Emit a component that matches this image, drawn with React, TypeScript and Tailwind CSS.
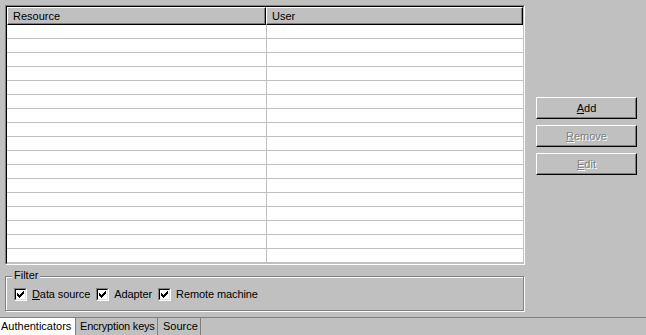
import React from "react";

const CHECK_COLS = [2, 3, 4, 3, 2, 1, 0];

const CheckBox = () => (
  <div className="w-[13px] h-[13px] border border-t-[#808080] border-l-[#808080] border-b-white border-r-white shrink-0">
    <div className="w-full h-full border border-t-black border-l-black border-b-[#dfdfdf] border-r-[#dfdfdf] bg-white">
      <svg width="9" height="9" viewBox="0 0 9 9" shapeRendering="crispEdges">
        {CHECK_COLS.map((start, i) => (
          <rect key={i} x={1 + i} y={1 + start} width="1" height="3" fill="#000" />
        ))}
      </svg>
    </div>
  </div>
);

const HeaderCell = ({ label, className }: { label: string; className: string }) => (
  <div
    className={`h-full border border-t-white border-l-white border-b-black border-r-black shadow-[inset_-1px_-1px_0_#808080] bg-[#c0c0c0] flex items-center pl-[5px] ${className}`}
  >
    {label}
  </div>
);

const Button = ({
  children,
  disabled,
}: {
  children: React.ReactNode;
  disabled?: boolean;
}) => (
  <button
    className={`h-[22px] w-full border border-t-white border-l-white border-b-black border-r-black shadow-[inset_-1px_-1px_0_#808080] bg-[#c0c0c0] flex items-center justify-center ${
      disabled ? "text-[#808080] [text-shadow:1px_1px_0_#fff]" : "text-black"
    }`}
  >
    {children}
  </button>
);

export default function App() {
  const rows = Array.from({ length: 17 });

  return (
    <div className="w-[646px] h-[335px] bg-[#c0c0c0] flex flex-col font-['Liberation_Sans',Arial,sans-serif] text-[11px] leading-none text-black select-none overflow-hidden">
      <div className="flex flex-1 pt-[5px] pl-[5px]">
        <div className="w-[520px] flex flex-col">
          {/* list view */}
          <div className="h-[260px] border border-t-[#808080] border-l-[#808080] border-b-white border-r-white">
            <div className="h-full border border-t-black border-l-black border-b-[#c0c0c0] border-r-[#c0c0c0] bg-white flex flex-col overflow-hidden">
              <div className="h-[18px] flex shrink-0">
                <HeaderCell label="Resource" className="w-[259px]" />
                <HeaderCell label="User" className="flex-1" />
              </div>
              {rows.map((_, i) => (
                <div key={i} className="h-[14px] shrink-0 flex border-b border-[#c0c0c0]">
                  <div className="w-[260px] border-r border-[#c0c0c0]" />
                  <div className="flex-1" />
                </div>
              ))}
            </div>
          </div>

          {/* filter group */}
          <div className="relative mt-[11px] h-[35px] w-[519px] border border-[#808080] shadow-[1px_1px_0_#fff,inset_1px_1px_0_#fff]">
            <span className="absolute left-[6px] top-[-7px] px-[2px] bg-[#c0c0c0]">Filter</span>
            <div className="flex items-center pl-[8px] pt-[11px] tracking-[-0.1px]">
              <CheckBox />
              <span className="ml-[5px]">
                <span className="underline">D</span>ata source
              </span>
              <div className="ml-[6px]">
                <CheckBox />
              </div>
              <span className="ml-[5px]">Adapter</span>
              <div className="ml-[6px]">
                <CheckBox />
              </div>
              <span className="ml-[5px]">Remote machine</span>
            </div>
          </div>
        </div>

        <div className="ml-[11px] mt-[92px] w-[101px] flex flex-col gap-[6px]">
          <Button>
            <span>
              <span className="underline">A</span>dd
            </span>
          </Button>
          <Button disabled>
            <span>
              <span className="underline">R</span>emove
            </span>
          </Button>
          <Button disabled>
            <span>
              <span className="underline">E</span>dit
            </span>
          </Button>
        </div>
      </div>

      {/* tabs */}
      <div className="h-[18px] shrink-0 border-t border-[#808080] flex">
        <div className="w-[76px] bg-white border-r border-[#808080] flex items-center pl-[1px]">
          Authenticators
        </div>
        <div className="w-[82px] border-r border-[#808080] flex items-center pl-[4px] whitespace-nowrap tracking-[-0.2px]">
          Encryption keys
        </div>
        <div className="w-[43px] border-r border-[#808080] flex items-center pl-[5px]">
          Source
        </div>
      </div>
    </div>
  );
}
